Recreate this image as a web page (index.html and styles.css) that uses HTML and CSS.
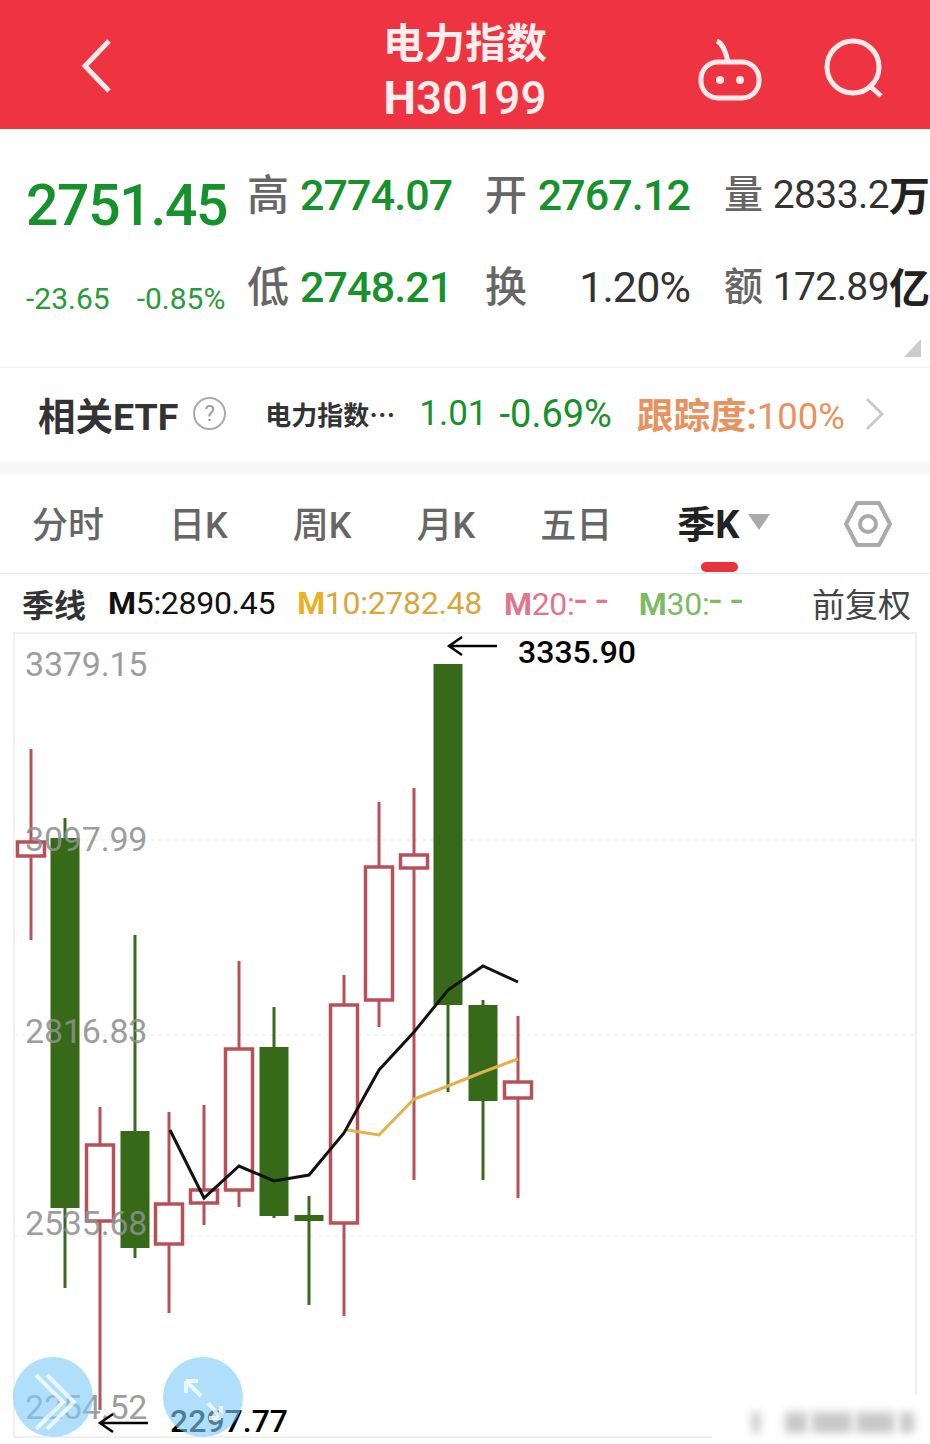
FILE: index.html
```html
<!DOCTYPE html>
<html lang="zh-CN">

<head>
    <meta charset="UTF-8">
    <meta name="viewport" content="width=device-width, initial-scale=1.0">
    <title>电力指数 H30199</title>
    <link rel="stylesheet" href="styles.css">
</head>

<body>
    <!-- 顶部标题栏 -->
    <header class="top-bar">
        <svg class="icon-back" width="60" height="70" viewBox="0 0 60 70">
            <path d="M41 10 L17 35 L41 60" />
        </svg>
        <div class="top-title">
            <div class="top-name">电力指数</div>
            <div class="top-code"><b>H</b>30199</div>
        </div>
        <div class="top-icons">
            <svg class="icon-robot" width="64" height="64" viewBox="0 0 64 64">
                <path d="M19 4 C24 6 27 12 30 25" />
                <rect x="3" y="25" width="58" height="36" rx="17" />
                <circle class="eye" cx="22" cy="43" r="4" />
                <circle class="eye" cx="42" cy="43" r="4" />
            </svg>
            <svg class="icon-search" width="64" height="64" viewBox="0 0 64 64">
                <circle cx="30" cy="30" r="26" />
                <path d="M47 49 L58 59" />
            </svg>
        </div>
    </header>

    <!-- 行情 -->
    <section class="quote">
        <div class="price-box">
            <div class="price">2751.45</div>
            <div class="change"><span>-23.65</span><span>-0.85%</span></div>
        </div>
        <div class="stats">
            <div class="stat s1"><b>高</b><span class="green">2774.07</span></div>
            <div class="stat s2"><b>开</b><span class="green">2767.12</span></div>
            <div class="stat s3"><b>量</b><span class="dark">2833.2</span><i>万</i></div>
            <div class="stat s1"><b>低</b><span class="green">2748.21</span></div>
            <div class="stat s2"><b>换</b><span class="dark">1.20%</span></div>
            <div class="stat s3"><b>额</b><span class="dark">172.89</span><i>亿</i></div>
        </div>
        <div class="corner"></div>
    </section>

    <!-- 相关ETF -->
    <section class="etf">
        <span class="etf-title">相关ETF</span>
        <span class="etf-help">?</span>
        <span class="etf-name">电力指数⋯</span>
        <span class="etf-price">1.01</span>
        <span class="etf-pct">-0.69%</span>
        <span class="etf-track"><b>跟踪度:</b>100%</span>
        <svg class="etf-more" width="22" height="34" viewBox="0 0 22 34">
            <path d="M3 2 L18 17 L3 32" />
        </svg>
    </section>

    <!-- 周期切换 -->
    <nav class="tabs">
        <span class="tab">分时</span>
        <span class="tab">日K</span>
        <span class="tab">周K</span>
        <span class="tab">月K</span>
        <span class="tab">五日</span>
        <span class="tab active">季K<em class="tab-arrow"></em></span>
        <svg class="icon-hex" width="50" height="50" viewBox="0 0 50 50">
            <path d="M14 4 H36 L47 25 L36 46 H14 L3 25 Z" />
            <circle cx="25" cy="25" r="8" />
        </svg>
    </nav>

    <div class="ma-row">
        <span class="ma-type">季线</span>
        <span class="ma m5"><b>M</b>5:2890.45</span>
        <span class="ma m10"><b>M</b>10:2782.48</span>
        <span class="ma m20"><b>M</b>20:<u>--</u></span>
        <span class="ma m30"><b>M</b>30:<u>--</u></span>
        <span class="ma-adjust">前复权</span>
    </div>

    <!-- K线图 -->
    <svg class="chart" id="chart" width="930" height="812" viewBox="0 632 930 812"></svg>

    <script src="chart.js"></script>
</body>

</html>
```

FILE: styles.css
```css
* {
    box-sizing: border-box;
}

body {
    width: 930px;
    height: 1444px;
    margin: 0;
    overflow: hidden;
    background: #fff;
    color: #333;
    font-family: Roboto, "Noto Sans CJK SC", sans-serif;
}

/* 顶部 */
.top-bar {
    height: 129px;
    background: #ee3440;
    display: grid;
    grid-template-columns: 1fr auto 1fr;
    align-items: center;
    color: #fdeeee;
}

.icon-back {
    margin: 2px 0 0 68px;
}

.icon-back path,
.icon-robot path,
.icon-robot rect,
.icon-search circle,
.icon-search path {
    fill: none;
    stroke: #fdeaea;
    stroke-width: 5;
}

.icon-robot .eye {
    fill: #fdeaea;
}

.top-title {
    align-self: start;
    padding-top: 17px;
    text-align: center;
}

.top-name {
    font-size: 41px;
    line-height: 54px;
    font-weight: 700;
}

.top-code {
    font-size: 46px;
    line-height: 54px;
    font-weight: 500;
}

.top-icons {
    display: flex;
    justify-content: flex-end;
    gap: 61px;
    padding-right: 43px;
    margin-top: 8px;
}

/* 行情 */
.quote {
    position: relative;
    height: 239px;
    border-bottom: 1px solid #eee;
    display: flex;
    padding: 42px 0 0 26px;
}

.price-box {
    width: 221px;
}

.price {
    font-size: 57px;
    line-height: 70px;
    font-weight: 500;
    color: #17912b;
    letter-spacing: -1.3px;
}

.change {
    display: flex;
    gap: 27px;
    margin-top: 38px;
    font-size: 30px;
    line-height: 40px;
    color: #2a9a3c;
    white-space: nowrap;
}

.stats {
    display: grid;
    grid-template-columns: 238px 239px 1fr;
    grid-auto-rows: 92px;
    flex: 1;
    margin-top: -8px;
}

.stat {
    display: flex;
    align-items: center;
    height: 64px;
    font-size: 43px;
}

.stat b {
    margin-top: -8px;
    font-size: 42px;
    font-weight: 500;
    color: #666;
}

.stat span {
    margin-left: 11px;
    letter-spacing: -0.9px;
}

.s2 {
    width: 205px;
}

.s2 span {
    margin-left: auto;
}

.s3 {
    width: 206px;
}

.s3 b {
    font-size: 39px;
}

.s3 span {
    margin-left: auto;
    font-size: 39px;
    letter-spacing: -0.6px;
}

.s3 i {
    margin-top: -4px;
    font-size: 41px;
    font-style: normal;
    font-weight: 700;
    color: #222;
}

.green {
    color: #17912b;
    font-weight: 500;
}

.dark {
    color: #333;
}

.corner {
    position: absolute;
    right: 9px;
    bottom: 10px;
    width: 0;
    height: 0;
    border-left: 17px solid transparent;
    border-bottom: 18px solid #ccc;
}

/* ETF */
.etf {
    height: 106px;
    display: flex;
    align-items: center;
    padding: 0 0 3px 38px;
    border-bottom: 12px solid #f7f7f7;
}

.etf-title {
    font-size: 37.5px;
    font-weight: 700;
    color: #333;
}

.etf-help {
    width: 33px;
    height: 33px;
    margin-left: 15px;
    border: 2px solid #aaa;
    border-radius: 50%;
    color: #999;
    font-size: 22px;
    line-height: 29px;
    text-align: center;
}

.etf-name {
    margin-left: 39px;
    width: 128px;
    font-size: 26px;
    font-weight: 700;
    white-space: nowrap;
    color: #333;
}

.etf-price,
.etf-pct {
    font-size: 35px;
    color: #17912b;
}

.etf-price {
    margin-left: 26px;
}

.etf-pct {
    margin-left: 12px;
    font-size: 38px;
}

.etf-track {
    margin-left: 25px;
    font-size: 36.5px;
    color: #e8935f;
    white-space: nowrap;
}

.etf-track b {
    font-weight: 700;
}

.etf-more {
    margin-left: 19px;
}

.etf-more path {
    fill: none;
    stroke: #ccc;
    stroke-width: 3;
}

/* 周期 */
.tabs {
    position: relative;
    height: 100px;
    border-bottom: 1px solid #e8e8e8;
    display: flex;
    align-items: center;
    gap: 65px;
    padding: 0 37px 4px 32px;
    font-size: 36px;
    color: #666;
}

.tab {
    font-weight: 500;
    white-space: nowrap;
}

.tab.active {
    position: relative;
    color: #222;
    font-size: 38px;
    font-weight: 700;
}

.tab.active::after {
    content: "";
    position: absolute;
    left: 24px;
    top: 68px;
    width: 37px;
    height: 10px;
    border-radius: 5px;
    background: #e8333f;
}

.tab-arrow {
    display: inline-block;
    position: absolute;
    left: 71px;
    top: 20px;
    border-left: 11px solid transparent;
    border-right: 11px solid transparent;
    border-top: 16px solid #aaa;
}

.icon-hex {
    margin: 4px 0 0 auto;
}

.icon-hex path,
.icon-hex circle {
    fill: none;
    stroke: #aaa;
    stroke-width: 4;
}

/* 均线 */
.ma-row {
    height: 58px;
    display: flex;
    align-items: center;
    gap: 22px;
    padding: 0 19px 0 22px;
    font-size: 32px;
}

.ma {
    white-space: nowrap;
    letter-spacing: -0.3px;
    line-height: 40px;
}

.ma b {
    font-weight: 700;
}

.ma u {
    text-decoration: none;
    font-size: 44px;
    line-height: 1;
    letter-spacing: 9px;
}

.ma-type {
    font-size: 32px;
    font-weight: 700;
    color: #333;
}

.ma-adjust {
    margin-left: auto;
    font-size: 33px;
    color: #444;
}

.m5 {
    color: #111;
}

.m10 {
    color: #d9a63c;
}

.m10 b {
    color: #eab01f;
}

.m20 {
    margin-top: -4px;
    color: #e0768d;
}

.m30 {
    margin-top: -4px;
    color: #7dbb62;
}

/* 图表 */
.chart {
    display: block;
}

.frame {
    fill: none;
    stroke: #f0f0f0;
    stroke-width: 2;
}

.grid-line {
    stroke: #f4f4f4;
    stroke-width: 2;
    stroke-dasharray: 4 4;
}

.wick,
.body-up {
    stroke: #b8505a;
}

.wick {
    stroke-width: 3;
}

.wick.down {
    stroke: #3a6a1f;
}

.body-up {
    fill: #fff;
    stroke-width: 3.5;
}

.body-down {
    fill: #366a18;
}

.line-black,
.line-gold {
    fill: none;
    stroke-width: 3;
}

.line-black {
    stroke: #111;
}

.line-gold {
    stroke: #e0b24a;
}

.axis-label {
    font-size: 34px;
    letter-spacing: -0.2px;
    fill: #8f8f8f;
    fill-opacity: 0.9;
}

.note {
    font-size: 32px;
    font-weight: 500;
    fill: #000;
}

.arrow {
    fill: none;
    stroke: #000;
    stroke-width: 2.5;
}

.float-btn {
    fill: #7fcbf8;
    fill-opacity: 0.62;
}

.float-icon {
    fill: none;
    stroke: #fff;
    stroke-opacity: 0.75;
    stroke-width: 4;
}

.patch {
    fill: #fff;
}

.blur-mark {
    fill: #c8c8c8;
    filter: blur(4px);
}
```

FILE: chart.js
```js
// x, 影线上, 影线下, 实体上, 实体下, 阳线/阴线
const candles = [
    [31, 749, 940, 842, 856, 'up'],
    [65, 818, 1288, 838, 1208, 'down'],
    [100, 1107, 1410, 1145, 1221, 'up'],
    [135, 935, 1258, 1131, 1248, 'down'],
    [169, 1112, 1313, 1204, 1244, 'up'],
    [204, 1105, 1225, 1190, 1203, 'up'],
    [239, 961, 1207, 1049, 1190, 'up'],
    [274, 1007, 1218, 1047, 1216, 'down'],
    [309, 1196, 1305, 1215, 1221, 'down'],
    [344, 975, 1316, 1005, 1223, 'up'],
    [379, 802, 1027, 867, 1000, 'up'],
    [414, 788, 1180, 855, 868, 'up'],
    [448, 664, 1092, 664, 1005, 'down'],
    [483, 1000, 1180, 1005, 1101, 'down'],
    [518, 1016, 1198, 1082, 1098, 'up']
];

const axis = [
    ['3379.15', 676],
    ['3097.99', 851],
    ['2816.83', 1043],
    ['2535.68', 1235],
    ['2254.52', 1419]
];

let svg = '';
svg += '<path class="frame" d="M14 1437 V633 H916 V1437 H14" />';
[840, 1035, 1236].forEach(y => {
    svg += `<line class="grid-line" x1="14" x2="916" y1="${y}" y2="${y}" />`;
});

candles.forEach(([x, top, bottom, bodyTop, bodyBottom, type]) => {
    svg += `<line class="wick ${type}" x1="${x}" x2="${x}" y1="${top}" y2="${bottom}" />`;
    if (type === 'up') {
        svg += `<rect class="body-up" x="${x - 13.5}" y="${bodyTop}" width="27" height="${bodyBottom - bodyTop}" />`;
    } else {
        svg += `<rect class="body-down" x="${x - 14.5}" y="${bodyTop}" width="29" height="${bodyBottom - bodyTop}" />`;
    }
});

svg += '<polyline class="line-gold" points="347,1130 379,1135 414,1099 448,1086 483,1072 518,1059" />';
svg += '<polyline class="line-black" points="170,1130 204,1198 239,1166 274,1181 309,1175 344,1133 379,1070 414,1032 448,990 483,966 518,982" />';

axis.forEach(([text, y]) => {
    svg += `<text class="axis-label" x="25" y="${y}">${text}</text>`;
});

// 手工标注
svg += '<path class="arrow" d="M497 646 H450 M462 637 L449 646 L462 655" />';
svg += '<text class="note" x="518" y="663">3335.90</text>';
svg += '<path class="arrow" d="M148 1423 H101 M113 1414 L100 1423 L113 1432" />';
svg += '<text class="note" x="170" y="1432">2297.77</text>';

// 悬浮按钮
svg += '<circle class="float-btn" cx="53" cy="1397" r="40" />';
svg += '<circle class="float-btn" cx="203" cy="1397" r="40" />';
svg += '<path class="float-icon" d="M36 1375 L63 1402 L36 1429 M47 1375 L74 1402 L47 1429" />';
svg += '<path class="float-icon" d="M186 1381 L201 1396 M186 1381 H198 M186 1381 V1393 M208 1403 L221 1418 M221 1418 H209 M221 1418 V1406" />';

// 右下角水印
svg += '<rect class="patch" x="712" y="1395" width="218" height="49" />';
[[752, 8], [785, 22], [812, 40], [856, 38], [900, 14]].forEach(([x, w]) => {
    svg += `<rect class="blur-mark" x="${x}" y="1412" width="${w}" height="21" />`;
});

document.getElementById('chart').innerHTML = svg;
```
